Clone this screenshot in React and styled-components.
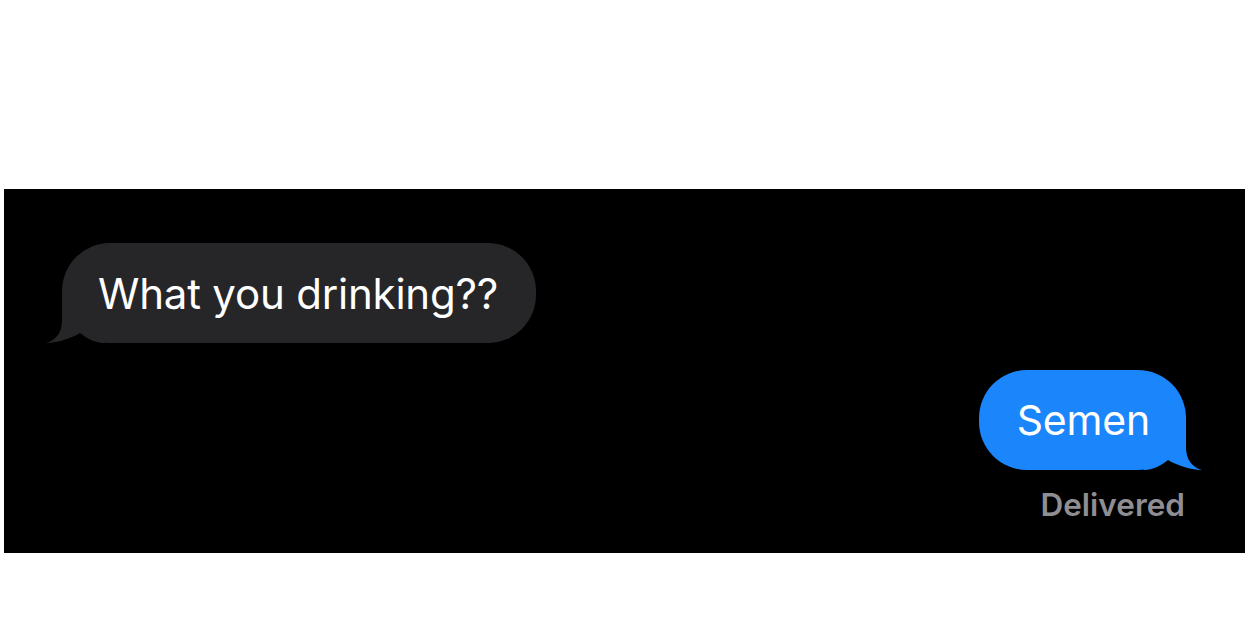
import React from "react";
import styled, { createGlobalStyle } from "styled-components";

const Global = createGlobalStyle`
  html, body { margin: 0; padding: 0; background: #ffffff; }
  body { font-family: Inter, "Noto Sans", "Liberation Sans", sans-serif; }
`;

const Page = styled.div`
  width: 1252px;
  height: 626px;
  padding-top: 189px;
  padding-left: 4px;
  box-sizing: border-box;
`;

const Thread = styled.div`
  width: 1241px;
  height: 364px;
  background: #000000;
  display: flex;
  flex-direction: column;
  padding-top: 54px;
  box-sizing: border-box;
`;

const Row = styled.div`
  display: flex;
  justify-content: ${(p) => (p.$out ? "flex-end" : "flex-start")};
  padding: ${(p) => (p.$out ? "0 59px 0 0" : "0 0 0 58px")};
  margin-top: ${(p) => p.$mt || 0}px;
`;

const Bubble = styled.div`
  position: relative;
  isolation: isolate;
  height: 100px;
  display: flex;
  align-items: center;
  padding: ${(p) => (p.$out ? "0 36px 0 38px" : "0 38px 0 36px")};
  border-radius: 48px;
  background: ${(p) => (p.$out ? "#1b86fb" : "#262629")};
  color: #ffffff;
  font-size: ${(p) => (p.$out ? 41 : 42)}px;
  font-weight: 400;
  letter-spacing: -0.2px;
  white-space: nowrap;
`;

const Tail = styled.svg`
  position: absolute;
  z-index: -1;
  bottom: 0;
  ${(p) => (p.$out ? "right: -18px; transform: scaleX(-1);" : "left: -18px;")}
  width: 60px;
  height: 50px;
  overflow: visible;
`;

const Status = styled.div`
  display: flex;
  justify-content: flex-end;
  padding-right: 60px;
  margin-top: 17px;
  color: #8e8e93;
  font-size: 31.5px;
  font-weight: 600;
  line-height: 36px;
`;

const BubbleTail = ({ out, color }) => (
  <Tail $out={out} viewBox="0 0 60 50">
    <path
      d="M18 0 L18 27 C18 40 12 47 2 50 C12 50 26 46 36 40 C42 45 50 49.5 60 50 L60 0 Z"
      fill={color}
    />
  </Tail>
);

export default function App() {
  return (
    <Page>
      <Global />
      <Thread>
        <Row>
          <Bubble>
            <BubbleTail color="#262629" />
            What you drinking??
          </Bubble>
        </Row>
        <Row $out $mt={27}>
          <Bubble $out>
            <BubbleTail out color="#1b86fb" />
            Semen
          </Bubble>
        </Row>
        <Status>Delivered</Status>
      </Thread>
    </Page>
  );
}
